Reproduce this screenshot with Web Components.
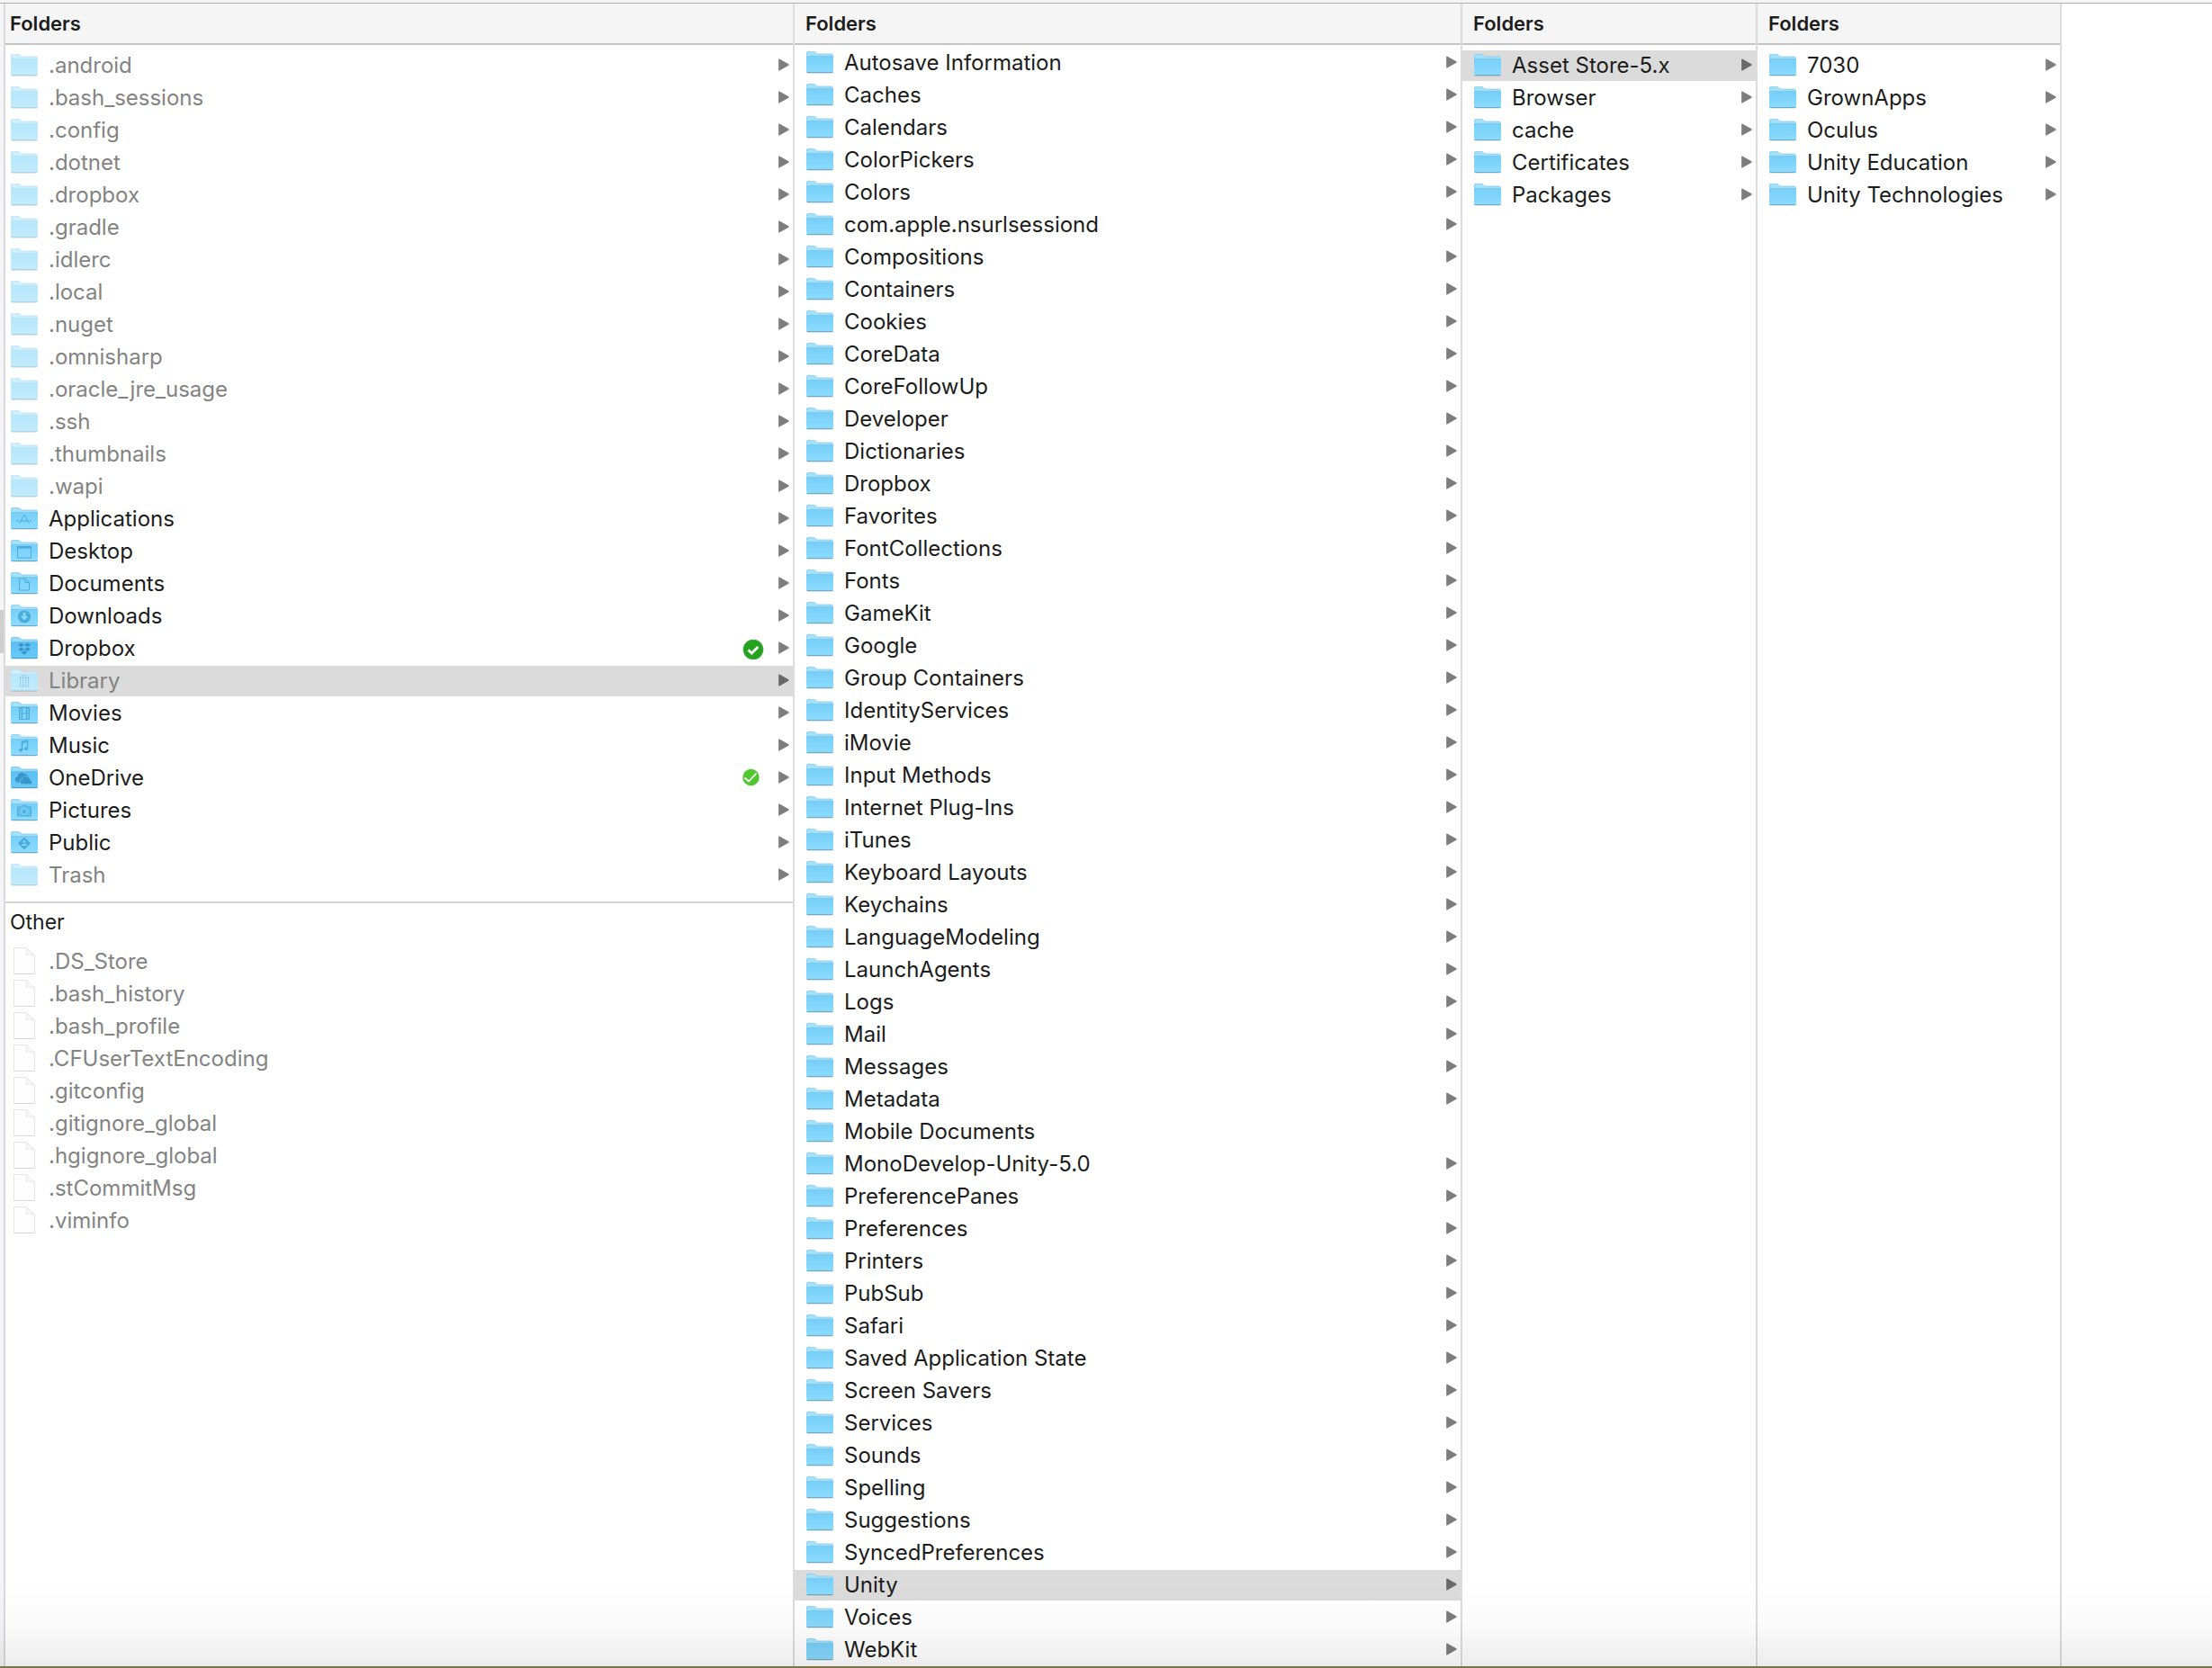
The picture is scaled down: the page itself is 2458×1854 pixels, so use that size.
<!DOCTYPE html>
<html lang="en">
<head>
<meta charset="utf-8">
<title>Folders</title>
<style>
  html, body { margin: 0; height: 100%; overflow: hidden; background: #fff; }
  body { font-family: Inter, "Liberation Sans", sans-serif; }
</style>
</head>
<body>
<finder-browser></finder-browser>

<script>
const GLYPHS = {
  apps: '<path d="M9.500 17.500 15 8l5.500 9.500"/><path d="M6.500 15h2.500M11 15h8M21 15h2.500" stroke-width="1.300" stroke-dasharray="2 .7"/>',
  desktop: '<path d="M7.500 7.500h15v12.500h-15z"/><path d="M7.500 8.500h15" stroke-width="2"/>',
  documents: '<path d="M9.500 7h6.500l4.500 4.500v8.500h-11zM16 7v4.500h4.500"/>',
  downloads: '<circle cx="15" cy="13.500" r="7" fill="currentColor" stroke="none"/><path d="M15 9v5" stroke="#8bdbfd" stroke-width="3"/><path d="M10.800 13h8.400L15 17.500z" fill="#8bdbfd" stroke="none"/>',
  dropbox: '<path d="m11.500 6.500 3.500 2.300-3.500 2.300L8 8.800zM18.500 6.500 22 8.800l-3.500 2.300L15 8.800zM11.500 11.500l3.500 2.300-3.500 2.300L8 13.800zM18.500 11.500l3.500 2.300-3.500 2.300-3.500-2.300zM15 15l3.500 2.300L15 19.700l-3.500-2.400z" fill="currentColor" stroke="none"/>',
  library: '<path d="M9 9.500 15 6.500l6 3zM9 19h12M10.500 10v8.500M13.500 10v8.500M16.500 10v8.500M19.500 10v8.500"/>',
  movies: '<path d="M9.500 6.500h11v13h-11zM12.500 6.500v13M17.500 6.500v13M12.500 13h5"/><path d="M11 7v12.500M19 7v12.500" stroke-dasharray="1 1.500" stroke-width="2"/>',
  music: '<path d="M12.500 17.500V8.500l6-1.500v9M12.500 9.500l6-1.500" stroke-width="1.500"/><ellipse cx="11" cy="17.800" rx="1.700" ry="1.300" fill="currentColor"/><ellipse cx="17" cy="16.300" rx="1.700" ry="1.300" fill="currentColor"/>',
  cloud: '<path d="M9.500 17.500H8a3 3 0 0 1-.5-6 4.800 4.800 0 0 1 8.500-3 4.500 4.500 0 0 1 3.500 2.500c-2-.6-3.800 0-4.800 1.800-3-.3-5 1.700-5.200 4.700z" fill="currentColor" stroke="none"/><path d="M13 19.500a2.600 2.600 0 0 1-.5-5.200 4.300 4.300 0 0 1 8.300-.8 3 3 0 0 1 1.500 2.500 1.800 1.800 0 0 1 0 3.500z" fill="currentColor" stroke="#5cbcf0" stroke-width=".8"/>',
  pictures: '<path d="M7.500 9h4l1.500-1.500h4l1.500 1.500h4v10h-15z" fill="#62bfec"/><circle cx="15" cy="14" r="3.500" stroke="#8bd9fb"/><circle cx="15" cy="14" r="1.500"/>',
  public: '<path d="m15 7 6.500 6.500-6.500 6.500-6.500-6.500z" fill="currentColor"/><circle cx="15" cy="11.500" r="1.500" fill="#84d5fa" stroke="none"/><path d="M12 16c.5-3 5.500-3 6 0z" fill="#84d5fa" stroke="none"/>'
};

const PALETTES = {
  normal: { top: '#76cff8', bottom: '#8bdbfd', back: '#a2e2fd', edge: '#7cc4e6', base: '#68a9c9', ink: '#4bacdb' },
  deep:   { top: '#5cc0f3', bottom: '#68c9f8', back: '#94dafa', edge: '#6cbbe2', base: '#4e9cc4', ink: '#3a94cc' },
  dim:    { top: '#b8e7fc', bottom: '#c2ebfe', back: '#cdf0fe', edge: '#b9dff0', base: '#b0d3e2', ink: '#98cfe8' }
};

class FinderIcon extends HTMLElement {
  connectedCallback() {
    const kind = this.getAttribute('kind');
    const glyph = this.getAttribute('glyph');
    const tone = this.hasAttribute('dim') ? 'dim' : glyph === 'dropbox' || glyph === 'cloud' ? 'deep' : 'normal';
    const c = PALETTES[tone];
    const art = kind === 'file'
      ? `<svg width="30" height="34" viewBox="0 0 30 34" aria-hidden="true">
           <path d="M3.500 1.500h14l9 9v20h-23z" fill="#fefefe" stroke="#e4e4e4"/>
           <path d="M3.500 30.500h23" stroke="#d8d8d8"/>
           <path d="M17.500 1.500c1 3 .5 6-.5 8 3-1 6.500-.5 9.500 1z" fill="#fafafa" stroke="#e6e6e6"/>
         </svg>`
      : `<svg width="30" height="34" viewBox="0 -4 30 34" aria-hidden="true">
           <defs><linearGradient id="g" x2="0" y2="1"><stop stop-color="${c.top}"/><stop offset="1" stop-color="${c.bottom}"/></linearGradient></defs>
           <path d="M0 2Q0 .5 1.500.500h7q1 0 1.800.800L11.500 2.500q.5.500 1.500.500h15.500q1.500 0 1.500 1.500V22H0z" fill="${c.back}"/>
           <path d="M.5 3.500V2Q.5.500 2 .500h6.500q1 0 1.800.800L11.500 2.500q.5.500 1.500.500h16" fill="none" stroke="${c.edge}" stroke-width=".7"/>
           <path d="M0 5.500h30V22q0 1.500-1.500 1.500h-27Q0 23.500 0 22z" fill="url(#g)"/>
           <path d="M0 5.500h30" stroke="${c.edge}" stroke-width=".8"/>
           <path d="M.5 23.500h29" stroke="${c.base}"/>
           <path d="M1 24.500h28" stroke="#000" stroke-opacity=".1"/>
           <g fill="none" color="${c.ink}" stroke="currentColor" stroke-width="1">${GLYPHS[glyph] || ''}</g>
         </svg>`;
    this.attachShadow({ mode: 'open' }).innerHTML =
      `<style>:host{display:block;width:30px;height:34px;flex:none}svg{display:block}</style>${art}`;
  }
}

class SyncBadge extends HTMLElement {
  connectedCallback() {
    const art = this.getAttribute('service') === 'dropbox'
      ? `<svg width="24" height="24" viewBox="0 0 24 24" aria-hidden="true">
           <circle cx="12" cy="13" r="11.300" fill="#3aa83a"/><circle cx="12" cy="13" r="10.300" fill="#25a31f"/>
           <path d="m6.500 13.500 3.800 3.500 7-7" fill="none" stroke="#fff" stroke-width="3"/></svg>`
      : `<svg width="24" height="24" viewBox="0 0 24 24" aria-hidden="true">
           <circle cx="9.500" cy="11" r="9.200" fill="#4fc82f"/>
           <path d="m2.500 11.500 4.500 4 8.500-9" fill="none" stroke="#fff" stroke-width="1.800"/></svg>`;
    this.attachShadow({ mode: 'open' }).innerHTML =
      `<style>:host{display:block;height:24px;flex:none}svg{display:block}</style>${art}`;
  }
}

class FinderItem extends HTMLElement {
  connectedCallback() {
    const sync = this.getAttribute('sync');
    const glyph = this.getAttribute('glyph') || '';
    const dim = this.hasAttribute('dim') ? 'dim' : '';
    this.attachShadow({ mode: 'open' }).innerHTML = `
      <style>
        :host { display: block; }
        button {
          display: flex; align-items: center; box-sizing: border-box;
          width: 100%; height: 34px; margin: 0; border: 0;
          padding: 0 4px 0 var(--inset, 13px);
          background: none; color: #1c1c1c; font: 400 24px/34px Inter, "Liberation Sans", sans-serif;
          text-align: left; white-space: nowrap;
        }
        .name { flex: 1; min-width: 0; margin-left: 12px; }
        .arrow { display: block; flex: none; color: #7d7d7d; }
        sync-badge { margin-right: 16px; }
        :host([dim]) .name { color: #838383; }
        :host([selected]) button { background: #dbdbdb; }
        :host([selected]) .arrow { color: #696969; }
      </style>
      <button type="button">
        <finder-icon kind="${this.getAttribute('kind')}" glyph="${glyph}" ${dim}></finder-icon>
        <span class="name"><slot></slot></span>
        ${sync ? `<sync-badge service="${sync}"></sync-badge>` : ''}
        ${this.hasAttribute('leaf') ? '' : `<svg class="arrow" width="12" height="16" viewBox="0 0 12 16" aria-hidden="true"><path d="M.8 1 11 6.700v.6L.8 13z" fill="currentColor" stroke="currentColor" stroke-width="1.200" stroke-linejoin="round"/></svg>`}
      </button>`;
  }
}

class FinderColumn extends HTMLElement {
  connectedCallback() {
    this.attachShadow({ mode: 'open' }).innerHTML = `
      <style>
        :host { display: block; box-sizing: border-box; min-width: 0; overflow: hidden; border-right: 2px solid #dcdcdc; }
        h2, h3 { margin: 0; padding-left: calc(var(--inset, 13px) - 1px); color: #1c1c1c; }
        h2 {
          height: 44px; background: #f5f5f5; border-bottom: 2px solid #c2c2c2;
          font-size: 22px; line-height: 44px; font-weight: 600;
        }
        h3 { font-size: 23px; line-height: 42px; font-weight: 400; }
        .list { display: flex; flex-direction: column; gap: 2px; padding-top: var(--lead, 6px); }
        .other { margin-top: 12px; border-top: 2px solid #d6d6d6; }
      </style>
      <h2>Folders</h2>
      <div class="list"><slot></slot></div>
      ${this.hasAttribute('grouped') ? '<section class="other"><h3>Other</h3><div class="list"><slot name="other"></slot></div></section>' : ''}`;
  }
}

const HOME = [
  ...'.android .bash_sessions .config .dotnet .dropbox .gradle .idlerc .local .nuget .omnisharp .oracle_jre_usage .ssh .thumbnails .wapi'
    .split(' ').map(name => ({ name, dim: '' })),
  { name: 'Applications', glyph: 'apps' },
  { name: 'Desktop', glyph: 'desktop' },
  { name: 'Documents', glyph: 'documents' },
  { name: 'Downloads', glyph: 'downloads' },
  { name: 'Dropbox', glyph: 'dropbox', sync: 'dropbox' },
  { name: 'Library', glyph: 'library', dim: '', selected: '' },
  { name: 'Movies', glyph: 'movies' },
  { name: 'Music', glyph: 'music' },
  { name: 'OneDrive', glyph: 'cloud', sync: 'onedrive' },
  { name: 'Pictures', glyph: 'pictures' },
  { name: 'Public', glyph: 'public' },
  { name: 'Trash', dim: '' },
  ...'.DS_Store .bash_history .bash_profile .CFUserTextEncoding .gitconfig .gitignore_global .hgignore_global .stCommitMsg .viminfo'
    .split(' ').map(name => ({ name, kind: 'file', slot: 'other', dim: '', leaf: '' }))
];

const LIBRARY = [
  'Autosave Information', 'Caches', 'Calendars', 'ColorPickers', 'Colors', 'com.apple.nsurlsessiond',
  'Compositions', 'Containers', 'Cookies', 'CoreData', 'CoreFollowUp', 'Developer', 'Dictionaries',
  'Dropbox', 'Favorites', 'FontCollections', 'Fonts', 'GameKit', 'Google', 'Group Containers',
  'IdentityServices', 'iMovie', 'Input Methods', 'Internet Plug-Ins', 'iTunes', 'Keyboard Layouts',
  'Keychains', 'LanguageModeling', 'LaunchAgents', 'Logs', 'Mail', 'Messages', 'Metadata',
  { name: 'Mobile Documents', leaf: '' }, 'MonoDevelop-Unity-5.0', 'PreferencePanes', 'Preferences',
  'Printers', 'PubSub', 'Safari', 'Saved Application State', 'Screen Savers', 'Services', 'Sounds',
  'Spelling', 'Suggestions', 'SyncedPreferences', { name: 'Unity', selected: '' }, 'Voices', 'WebKit'
];

const UNITY = [{ name: 'Asset Store-5.x', selected: '' }, 'Browser', 'cache', 'Certificates', 'Packages'];
const ASSET_STORE = ['7030', 'GrownApps', 'Oculus', 'Unity Education', 'Unity Technologies'];

const renderItem = entry => {
  const { name, ...attrs } = typeof entry === 'string' ? { name: entry } : entry;
  const list = Object.entries({ kind: 'folder', ...attrs }).map(([k, v]) => `${k}="${v}"`).join(' ');
  return `<finder-item ${list}>${name}</finder-item>`;
};
const renderItems = entries => entries.map(renderItem).join('');

class FinderBrowser extends HTMLElement {
  connectedCallback() {
    this.attachShadow({ mode: 'open' }).innerHTML = `
      <style>
        :host { display: flex; flex-direction: column; height: 100vh; position: relative; }
        .toolbar { height: 3px; flex: none; background: #f5f5f5; border-bottom: 1px solid #adadad; }
        .body { flex: 1; min-height: 0; display: flex; }
        .sidebar { box-sizing: border-box; width: 6px; flex: none; background: #f5f5f7; border-right: 2px solid #dadada; }
        .sidebar i { display: block; height: 48px; margin-top: 674px; background: #cfcfcf; }
        main { flex: 1; min-width: 0; display: grid; grid-template-columns: 877fr 742fr 328fr 338fr 167fr; grid-template-rows: minmax(0, 1fr); }
        .home { --inset: 6px; }
        .library { --lead: 3px; }
        .desk { height: 2px; flex: none; background: #7d7448; }
        .shade { position: absolute; left: 0; right: 0; bottom: 2px; height: 92px; pointer-events: none;
          background: linear-gradient(rgba(0,0,0,0), rgba(0,0,0,.02) 50%, rgba(0,0,0,.075)); }
      </style>
      <div class="toolbar"></div>
      <div class="body">
        <div class="sidebar"><i></i></div>
        <main>
          <finder-column class="home" grouped>${renderItems(HOME)}</finder-column>
          <finder-column class="library">${renderItems(LIBRARY)}</finder-column>
          <finder-column>${renderItems(UNITY)}</finder-column>
          <finder-column>${renderItems(ASSET_STORE)}</finder-column>
        </main>
      </div>
      <div class="desk"></div>
      <div class="shade"></div>`;
  }
}

customElements.define('finder-icon', FinderIcon);
customElements.define('sync-badge', SyncBadge);
customElements.define('finder-item', FinderItem);
customElements.define('finder-column', FinderColumn);
customElements.define('finder-browser', FinderBrowser);
</script>
</body>
</html>
